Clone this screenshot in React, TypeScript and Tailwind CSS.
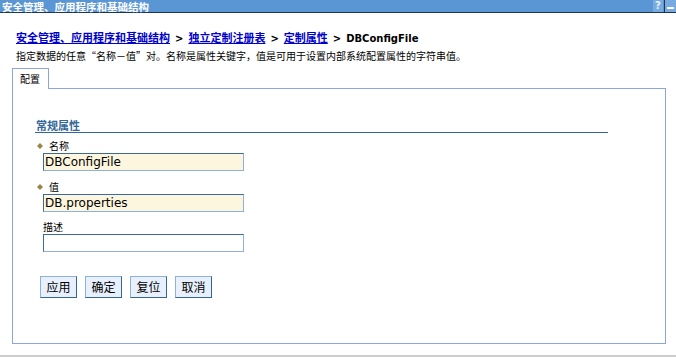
import React from 'react';

const Diamond = () => (
  <svg width="6" height="6" viewBox="0 0 6 6" className="block">
    <polygon points="3,0 6,3 3,6 0,3" fill="#9a8644" />
  </svg>
);

const inputClass =
  "block ml-[6px] mt-px w-[201px] h-[18px] px-[1px] border border-[#8fb0d8] border-t-[#3a6a9e] border-l-[#3a6a9e] text-[12px] leading-[16px] text-black outline-none font-['DejaVu_Sans',sans-serif]";

const buttonClass =
  "w-[37px] h-[22px] bg-[#e7f0fc] border border-[#8db2de] border-r-[#34659a] border-b-[#34659a] text-[12px] leading-[20px] text-black font-['Noto_Sans_CJK_SC',sans-serif]";

export default function App() {
  return (
    <div className="w-[676px] h-[357px] bg-white overflow-hidden text-black font-['DejaVu_Sans','Noto_Sans_CJK_SC',sans-serif]">
      {/* title bar */}
      <div className="h-[13px] flex items-stretch bg-[#5a96d3] border-b border-[#1d3550]">
        <div className="flex-1 pl-[2px] pt-px text-[10.5px] leading-[11px] font-bold text-white font-['Noto_Sans_CJK_SC',sans-serif]">
          安全管理、应用程序和基础结构
        </div>
        <span className="w-[10px] flex items-center justify-center bg-[#78ace0] text-[10px] leading-none font-bold text-[#e8f2fc]">?</span>
        <span className="w-px bg-[#1d3550] ml-[1px]" />
        <span className="w-[11px] flex items-end justify-center pb-[3px] bg-[#78ace0]">
          <span className="block w-[7px] h-[2px] bg-white" />
        </span>
      </div>

      {/* breadcrumb */}
      <div className="pl-[16px] mt-[17px] text-[11px] leading-[14px] font-bold whitespace-nowrap">
        <a className="text-[#0000cc] underline font-['Noto_Sans_CJK_SC',sans-serif]">安全管理、应用程序和基础结构</a>
        <span className="text-[10px] mx-[5px]">&gt;</span>
        <a className="text-[#0000cc] underline font-['Noto_Sans_CJK_SC',sans-serif]">独立定制注册表</a>
        <span className="text-[10px] mx-[5px]">&gt;</span>
        <a className="text-[#0000cc] underline font-['Noto_Sans_CJK_SC',sans-serif]">定制属性</a>
        <span className="text-[10px] mx-[5px]">&gt;</span>
        <span className="text-[10px]">DBConfigFile</span>
      </div>
      <p className="pl-[16px] mt-[4px] text-[10px] leading-[12px] whitespace-nowrap font-['Noto_Sans_CJK_SC',sans-serif]">
        指定数据的任意“名称－值”对。名称是属性关键字，值是可用于设置内部系统配置属性的字符串值。
      </p>

      {/* tab + panel */}
      <div className="ml-[12px] mt-[6px] w-[654px]">
        <div className="relative z-10 -mb-px w-[37px] h-[21px] bg-white border-l border-t border-r border-[#8ca6d8] pl-[7px] text-[10px] leading-[20px] font-['Noto_Sans_CJK_SC',sans-serif]">
          配置
        </div>
        <div className="h-[256px] border border-[#8ca6d8] pt-[30px] pl-[22px]">
          <div className="w-[573px] border-b border-[#336699] pl-px text-[11px] leading-[13px] font-bold text-[#336699] font-['Noto_Sans_CJK_SC',sans-serif]">
            常规属性
          </div>

          <div className="ml-[2px]">
            <div className="mt-[7px] flex items-center h-[12px]">
              <Diamond />
              <span className="ml-[6px] text-[10px] leading-[12px] font-['Noto_Sans_CJK_SC',sans-serif]">名称</span>
            </div>
            <input className={`${inputClass} bg-[#fdf6de]`} defaultValue="DBConfigFile" />

            <div className="mt-[10px] flex items-center h-[12px]">
              <Diamond />
              <span className="ml-[6px] text-[10px] leading-[12px] font-['Noto_Sans_CJK_SC',sans-serif]">值</span>
            </div>
            <input className={`${inputClass} bg-[#fdf6de]`} defaultValue="DB.properties" />

            <div className="mt-[9px] h-[12px] pl-[6px] text-[10px] leading-[12px] font-['Noto_Sans_CJK_SC',sans-serif]">描述</div>
            <input className={`${inputClass} bg-white`} defaultValue="" />

            <div className="mt-[24px] ml-[3px] flex gap-[8px]">
              <button className={buttonClass}>应用</button>
              <button className={buttonClass}>确定</button>
              <button className={buttonClass}>复位</button>
              <button className={buttonClass}>取消</button>
            </div>
          </div>
        </div>
      </div>

      <div className="mt-[11px] h-[2px] bg-[#cccccc]" />
    </div>
  );
}
